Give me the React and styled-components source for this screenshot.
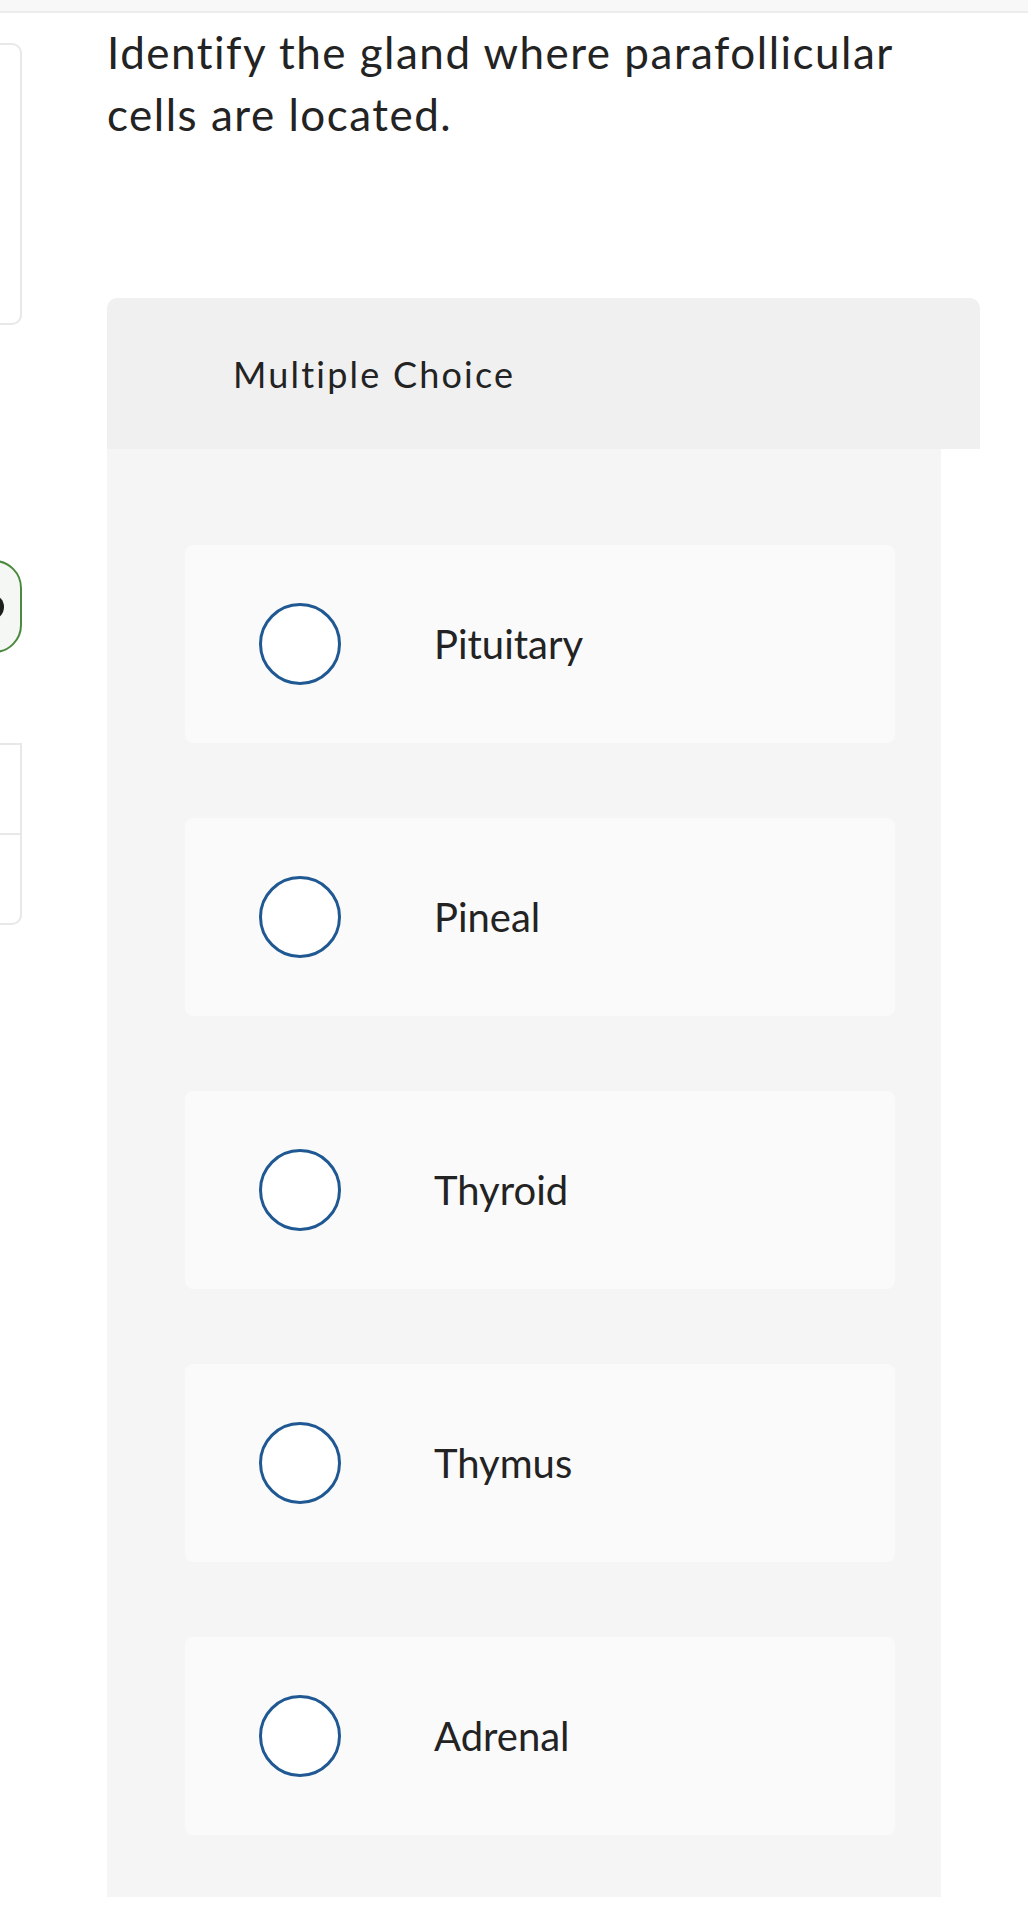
import styled, { createGlobalStyle } from 'styled-components'

const GlobalStyle = createGlobalStyle`
  html, body {
    margin: 0;
    padding: 0;
    background: #ffffff;
  }
  body {
    font-family: 'Lato', 'Liberation Sans', sans-serif;
    color: #232323;
  }
`

const Page = styled.div`
  width: 1028px;
  min-height: 1924px;
  overflow: hidden;
`

const TopBar = styled.div`
  height: 11px;
  background: #f8f8f8;
  border-bottom: 2px solid #ececec;
`

const Main = styled.div`
  display: flex;
  flex-direction: row;
  gap: 85px;
`

// sidebar is mostly scrolled off the left edge, only the right rims show
const Sidebar = styled.aside`
  width: 22px;
  flex-shrink: 0;
  display: flex;
  flex-direction: column;
  align-items: flex-end;
  padding-top: 30px;
`

const SideCard = styled.div`
  width: 260px;
  height: 282px;
  box-sizing: border-box;
  border: 2px solid #e8e8e8;
  border-radius: 10px;
  background: #fff;
  flex-shrink: 0;
`

const StatusPill = styled.div`
  margin-top: 235px;
  width: 120px;
  height: 93px;
  box-sizing: border-box;
  border: 2px solid #4b8a3e;
  border-radius: 28px;
  background: #f4f7f3;
  display: flex;
  align-items: center;
  justify-content: flex-end;
  padding-right: 16px;
  flex-shrink: 0;
`

const Dot = styled.span`
  width: 22px;
  height: 24px;
  border-radius: 50%;
  background: #1e1e1e;
`

const SideList = styled.div`
  margin-top: 90px;
  width: 260px;
  box-sizing: border-box;
  border: 2px solid #e8e8e8;
  border-radius: 0 0 10px 0;
  background: #fff;
  flex-shrink: 0;
`

const SideRow = styled.div`
  height: 88px;
  & + & {
    border-top: 2px solid #e8e8e8;
  }
`

const Content = styled.main`
  width: 873px;
  display: flex;
  flex-direction: column;
`

const Question = styled.h1`
  margin: 0;
  padding-top: 8px;
  font-size: 44px;
  font-weight: 400;
  line-height: 62px;
  letter-spacing: 1.5px;
  color: #232323;
  width: 840px;
`

const Panel = styled.section`
  margin-top: 153px;
  display: flex;
  flex-direction: column;
`

const PanelHeader = styled.div`
  height: 151px;
  background: #f0f0f0;
  border-radius: 10px 10px 0 0;
  display: flex;
  align-items: center;
  padding-left: 126px;
  font-size: 36px;
  letter-spacing: 2.2px;
  color: #232323;
`

const PanelBody = styled.div`
  width: 834px;
  box-sizing: border-box;
  background: #f5f5f5;
  padding: 96px 46px 62px 78px;
  display: flex;
  flex-direction: column;
  gap: 75px;
`

const Choice = styled.label`
  height: 198px;
  background: #fafafa;
  border-radius: 8px;
  display: flex;
  align-items: center;
  padding-left: 74px;
  gap: 93px;
  cursor: pointer;
`

const Radio = styled.span`
  width: 82px;
  height: 82px;
  box-sizing: border-box;
  border-radius: 50%;
  border: 3px solid #1f5892;
  background: #ffffff;
  flex-shrink: 0;
`

const ChoiceText = styled.span`
  font-size: 40px;
  color: #232323;
`

const choices = ['Pituitary', 'Pineal', 'Thyroid', 'Thymus', 'Adrenal']

export default function App() {
  return (
    <Page>
      <GlobalStyle />
      <TopBar />
      <Main>
        <Sidebar>
          <SideCard />
          <StatusPill>
            <Dot />
          </StatusPill>
          <SideList>
            <SideRow />
            <SideRow />
          </SideList>
        </Sidebar>
        <Content>
          <Question>Identify the gland where parafollicular cells are located.</Question>
          <Panel>
            <PanelHeader>Multiple Choice</PanelHeader>
            <PanelBody>
              {choices.map((c) => (
                <Choice key={c}>
                  <Radio />
                  <ChoiceText>{c}</ChoiceText>
                </Choice>
              ))}
            </PanelBody>
          </Panel>
        </Content>
      </Main>
    </Page>
  )
}
